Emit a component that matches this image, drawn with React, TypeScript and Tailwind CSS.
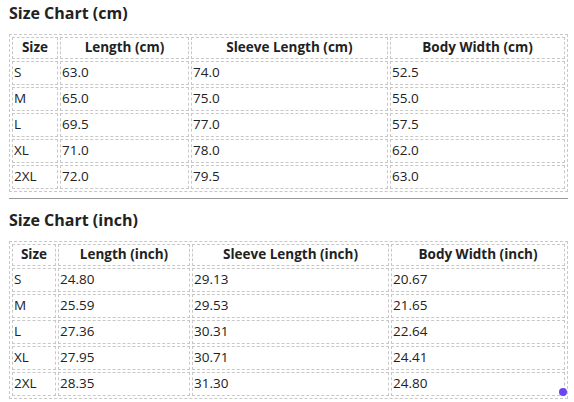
import React from 'react';

type Row = [string, string, string, string];

const cmRows: Row[] = [
  ['S', '63.0', '74.0', '52.5'],
  ['M', '65.0', '75.0', '55.0'],
  ['L', '69.5', '77.0', '57.5'],
  ['XL', '71.0', '78.0', '62.0'],
  ['2XL', '72.0', '79.5', '63.0'],
];

const inchRows: Row[] = [
  ['S', '24.80', '29.13', '20.67'],
  ['M', '25.59', '29.53', '21.65'],
  ['L', '27.36', '30.31', '22.64'],
  ['XL', '27.95', '30.71', '24.41'],
  ['2XL', '28.35', '31.30', '24.80'],
];

const SizeTable: React.FC<{ unit: string; rows: Row[]; widths: string[] }> = ({ unit, rows, widths }) => {
  const heads = ['Size', `Length (${unit})`, `Sleeve Length (${unit})`, `Body Width (${unit})`];
  return (
    <table className="w-full table-fixed border-separate border-spacing-[2px] border border-dashed border-[#c8c8c8] text-[13.5px] text-[#222]">
      <thead>
        <tr>
          {heads.map((h, i) => (
            <th key={h} className={`${widths[i]} h-[22px] p-0 border border-dashed border-[#c8c8c8] text-center font-bold leading-none`}>
              {h}
            </th>
          ))}
        </tr>
      </thead>
      <tbody>
        {rows.map((r) => (
          <tr key={r[0]}>
            {r.map((c, i) => (
              <td key={i} className="h-[24px] px-[1px] py-0 border border-dashed border-[#c8c8c8] text-left leading-none">
                {c}
              </td>
            ))}
          </tr>
        ))}
      </tbody>
    </table>
  );
};

export default function App() {
  return (
    <div className="relative min-h-[402px] bg-white pl-[9px] pr-[6px] pt-px font-['Open_Sans',sans-serif] text-[#222]">
      <h2 className="h-[24px] text-[16px] font-bold leading-[24px]">Size Chart (cm)</h2>
      <div className="mt-[9px]">
        <SizeTable unit="cm" rows={cmRows} widths={['w-[46px]', 'w-[129px]', 'w-[197px]', 'w-[175px]']} />
      </div>
      <hr className="mt-[6px] border-t border-[#9a9a9a]" />
      <h2 className="mt-[9px] h-[24px] text-[16px] font-bold leading-[24px]">Size Chart (inch)</h2>
      <div className="mt-[9px]">
        <SizeTable unit="inch" rows={inchRows} widths={['w-[44px]', 'w-[132px]', 'w-[197px]', 'w-[174px]']} />
      </div>
      <div className="absolute left-[559px] top-[388px] h-[8px] w-[8px] rounded-full bg-[#6a45f0]" />
    </div>
  );
}
